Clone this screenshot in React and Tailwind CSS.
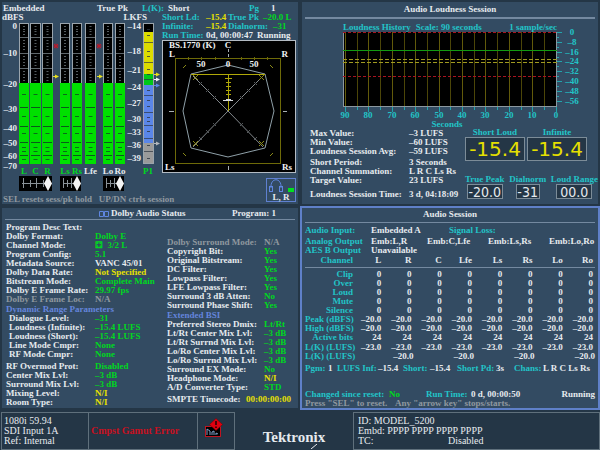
const METERS = [
  { x: 19, w: 10, label: "L", on: true },
  { x: 30, w: 11, label: "C", on: true },
  { x: 42, w: 11, label: "R", on: true },
  { x: 60, w: 10, label: "Ls", on: true },
  { x: 72, w: 10, label: "Rs", on: true },
  { x: 85, w: 11, label: "Lfe", on: false },
  { x: 103, w: 10, label: "Lo", on: false },
  { x: 115, w: 10, label: "Ro", on: false },
];

const DBFS = [["0", 26], ["–10", 53], ["–20", 84], ["–30", 109], ["–40", 128], ["–50", 143], ["–60", 156], ["–70", 166]];
const LKFS = [["–14", 26], ["–18", 51], ["–21", 70], ["–24", 87], ["–27", 103], ["–30", 119], ["–33", 132], ["–36", 145], ["–39", 158]];
const MAJOR_BLACK = [37, 53, 68];
const MINOR_BLACK = [26, 29, 31, 34, 40, 43, 46, 49, 56, 59, 62, 65, 71, 74, 77, 80];
const MAJOR_GREEN = [107, 126, 142, 155];
const MINOR_GREEN = [94, 116, 133, 147, 151, 159];

function Meter({ x, w }) {
  const c = x + w / 2;
  return (
    <g>
      <rect x={x} y="23" width={w} height="141" fill="#9aa4ac" />
      <rect x={x + 1} y="24" width={w - 2} height="59" fill="#000" />
      <rect x={x} y="83" width={w} height="81" fill="#00e000" />
      {MAJOR_BLACK.map((y) => <rect key={y} x={x + 1} y={y} width={w - 2} height="1" fill="#5f676c" />)}
      {MINOR_BLACK.map((y) => <rect key={y} x={c - 1} y={y} width="2" height="1" fill="#555c60" />)}
      {MAJOR_GREEN.map((y) => <rect key={y} x={x + 1} y={y} width={w - 2} height="1" fill="#0a5a1a" />)}
      {MINOR_GREEN.map((y) => <rect key={y} x={c - 2} y={y} width="4" height="1" fill="#0a6a1a" />)}
    </g>
  );
}

function Arrow({ x, y, color }) {
  return (
    <g fill={color}>
      <rect x={x} y={y - 0.5} width="4" height="1" />
      <path d={`M${x + 2} ${y - 2}l4 2l-4 2z`} />
    </g>
  );
}

function Correlation({ x, w, at }) {
  const ticks = [0.12, 0.32, 0.52, 0.72];
  return (
    <g>
      <rect x={x} y="176" width={w} height="15" fill="#000" />
      <rect x={x + 3} y="183" width={w - 6} height="1" fill="#8a9298" />
      {ticks.map((t, i) => (
        <rect key={t} x={Math.round(x + t * w)} y={i % 2 ? 180 : 178} width="1" height={i % 2 ? 7 : 10} fill="#8a9298" />
      ))}
      <path d={`M${at} 176l4 7.500l-4 7.500l-4 -7.500z`} fill="#f4f4f4" />
    </g>
  );
}

function MeterBridge() {
  return (
    <svg viewBox="2 22 158 169" width="158" height="169" className="block overflow-visible" fontSize="9" role="img" aria-label="Channel level meters">
      {METERS.map((m) => <Meter key={m.label} x={m.x} w={m.w} />)}
      {DBFS.map(([t, y]) => <text key={t} x="17" y={y + 3} textAnchor="end" fill="#e6eaee">{t}</text>)}
      {LKFS.map(([t, y]) => <text key={t} x="141" y={y + 3} textAnchor="end" fill="#e6eaee">{t}</text>)}
      {[56, 99].map((x) => (
        <g key={x} stroke="#c01828" strokeWidth="1">
          <path d={`M${x - 2.5} 46h5M${x} 43.500v5M${x - 2} 44l4 4M${x + 2} 44l-4 4`} />
        </g>
      ))}
      <Arrow x={53} y={76.5} color="#e8e020" />
      <Arrow x={97} y={76.5} color="#e8e020" />
      <rect x="143" y="23" width="11" height="141" fill="#9aa4ac" />
      <rect x="144" y="24" width="9" height="8" fill="#000" />
      <rect x="144" y="32" width="9" height="42" fill="#dcdc00" />
      <rect x="144" y="74" width="9" height="11" fill="#00c818" />
      <rect x="144" y="85" width="9" height="58" fill="#5a86e8" />
      <rect x="144" y="143" width="9" height="20" fill="#9a9a9a" />
      {[42, 62, 79, 95, 112, 125, 138, 151].map((y) => <rect key={y} x="144" y={y} width="9" height="1" fill="#2c3440" opacity="0.7" />)}
      {[29, 35, 51, 56, 69, 74, 90, 100, 106, 117, 121, 131, 145, 158].map((y) => <rect key={y} x="147" y={y} width="3" height="1" fill="#2c3440" opacity="0.8" />)}
      <Arrow x={154} y={74.5} color="#e8e020" />
      <Arrow x={154} y={79.5} color="#f4f4f4" />
      <Arrow x={154} y={85.5} color="#5a86e8" />
      <Arrow x={154} y={143.5} color="#b4b8bc" />
      {METERS.map((m) => (
        <text key={m.label} x={m.x + m.w / 2} y="174" textAnchor="middle" fill={m.on ? "#00d820" : "#e6eaee"}>{m.label}</text>
      ))}
      <text x="148" y="174" textAnchor="middle" fill="#00d820">P1</text>
      <Correlation x={19} w={33} at={48} />
      <Correlation x={60} w={21} at={77} />
      <Correlation x={103} w={21} at={120} />
    </svg>
  );
}

function SurroundScope() {
  return (
    <svg viewBox="162 40 134 133" width="134" height="133" className="block" fontSize="9" fill="none" role="img" aria-label="Surround sound display">
      <rect x="162.500" y="40.500" width="133" height="132" fill="#000" stroke="#b4bcc4" />
      <rect x="175.500" y="58.500" width="105" height="105" stroke="#6e6a08" />
      <path d="M188.500 57v3M201.500 57v3M215.500 57v3M241.500 57v3M254.500 57v3M267.500 57v3" stroke="#6e6a08" />
      <path d="M228 65L265 74L274 111L265 148L228 157L191 148L183 111L191 74z" stroke="#8fa0a8" />
      <path d="M193 76L228 111L263 76M193 147L228 111L263 147" stroke="#82888c" />
      <path d="M202 82l-3 3M209 89l-3 3M216 96l-3 3M254 82l3 3M247 89l3 3M240 96l3 3M202 140l-3 -3M209 133l-3 -3M216 126l-3 -3M254 140l3 -3M247 133l3 -3M240 126l3 -3" stroke="#55595c" />
      <path d="M191 74.500h74M228.500 74v37" stroke="#b0a808" />
      <path d="M225 78.500h7M226 82.500h5M226 86.500h5M226 90.500h5M226 94.500h5" stroke="#b0a808" />
      <path d="M223 100.500h10M226 99.500h5" stroke="#d8dce0" />
      <path d="M193 75l5 5M198 75l-5 5M259 75l5 5M264 75l-5 5M193 141l5 5M198 141l-5 5M259 141l5 5M264 141l-5 5M183 68l3 -3M273 68l-3 -3M183 153l3 3M273 153l-3 3" stroke="#8a8a18" />
      <path d="M228.500 49v3M228.500 54v3M228.500 166v4M169 111.500h5M283 111.500h4" stroke="#a8b0b4" />
      <g fill="#f0f2f4">
        <text x="169" y="48">BS.1770 (K)</text>
        <text x="228" y="48" textAnchor="middle">C</text>
        <text x="169" y="57">L</text>
        <text x="288" y="57" textAnchor="end">R</text>
        <text x="201" y="67" textAnchor="middle">50</text>
        <text x="228" y="67" textAnchor="middle">0</text>
        <text x="254" y="67" textAnchor="middle">50</text>
        <text x="165" y="170">Ls</text>
        <text x="292" y="170" textAnchor="end">Rs</text>
      </g>
    </svg>
  );
}

function LevelsPanel() {
  return (
    <section className="bg-[#334b62] pt-[2px] pl-px">
      <div className="grid grid-cols-[94px_45px_26px_81px_22px_1fr]">
        <span>Embedded</span>
        <span>True Pk</span>
        <span className="text-[#22c4c8]">L(K):</span>
        <span>Short</span>
        <span className="text-[#22c4c8]">Pg</span>
        <span>1</span>
      </div>
      <div className="grid grid-cols-[159px_1fr]">
        <div className="-ml-px">
          <div className="flex justify-between pr-[15px]">
            <span>dBFS</span>
            <span>LKFS</span>
          </div>
          <MeterBridge />
          <p className="mt-1 pl-px whitespace-pre text-[#8f989f]">SEL resets sess/pk hold   UP/DN ctrls session</p>
        </div>
        <div>
          <div className="grid grid-cols-[44px_22px_35px_1fr]">
            <span className="text-[#22c4c8]">Short Ld:</span>
            <span className="text-[#e6e000]">–15.4</span>
            <span className="whitespace-nowrap text-[#22c4c8]">True Pk</span>
            <span className="text-[#00d820]">–20.0 L</span>
          </div>
          <div className="grid grid-cols-[44px_22px_45px_1fr]">
            <span className="text-[#22c4c8]">Infinite:</span>
            <span className="text-[#e6e000]">–15.4</span>
            <span className="text-[#22c4c8]">Dialnorm:</span>
            <span className="text-[#00d820]">–31</span>
          </div>
          <div className="grid grid-cols-[44px_51px_1fr] whitespace-nowrap">
            <span className="text-[#22c4c8]">Run Time:</span>
            <span>0d, 00:00:47</span>
            <span>Running</span>
          </div>
          <SurroundScope />
          <div className="mt-[5px] ml-auto mr-[2px] h-6 w-[30px] border border-[#5f80d0] px-[2px]">
            <svg viewBox="0 0 26 14" width="26" height="14" className="block" fill="none" role="img" aria-label="Headphones">
              <path d="M2 9C1 -2 13 -2 12 9" stroke="#5f86e0" />
              <rect x="0.500" y="7.500" width="3" height="5" stroke="#5f86e0" />
              <rect x="10.500" y="7.500" width="3" height="5" stroke="#5f86e0" />
              <rect x="19" y="9" width="6" height="4" fill="#00e020" />
            </svg>
            <p className="text-center leading-[8px]">L, R</p>
          </div>
        </div>
      </div>
    </section>
  );
}

const Y_AXIS = ["0", "–8", "–16", "–24", "–32", "–40", "–48", "–56"];

function HistoryChart() {
  const lines = Array.from({ length: 19 }, (_, i) => Math.round(345 + i * 11.7));
  return (
    <svg viewBox="302 32 296 96" className="block w-full overflow-visible" fontSize="9" role="img" aria-label="Loudness history">
      <rect x="343" y="32" width="214" height="75" fill="#000" />
      {lines.map((x, i) => <rect key={x} x={x} y="32" width="1" height="75" fill={i % 2 ? "#4c4608" : "#625a0a"} />)}
      <path d="M343.500 107V32M343 106.500h214M556.500 107V32" stroke="#8c98a0" fill="none" />
      <path d="M343 50.500h214" stroke="#129a12" />
      <path d="M343 59.500h214M343 62.500h214" stroke="#a09a20" strokeDasharray="4 2" />
      <path d="M343 32.500h214M343 76.500h214" stroke="#a81420" strokeDasharray="3 2" />
      {lines.map((x, i) => <rect key={x} x={x} y="107" width="1" height={i % 2 ? 3 : 5} fill="#22a4ac" />)}
      {Array.from({ length: 15 }, (_, i) => (
        <rect key={i} x="557" y={32 + Math.round(i * 4.9)} width={i % 2 ? 2 : 5} height="1" fill="#22a4ac" />
      ))}
      <g fill="#22c4c8" textAnchor="middle">
        {Y_AXIS.map((t, i) => <text key={t} x="572" y={35 + Math.round(i * 9.8)}>{t}</text>)}
        {[90, 80, 70, 60, 50, 40, 30, 20, 10, 0].map((t, i) => (
          <text key={t} x={Math.round(345 + i * 23.4)} y="118">{t}</text>
        ))}
        <text x="447" y="127">Seconds</text>
      </g>
    </svg>
  );
}

const SESSION_FACTS = [
  [["Max Value:", "–3 LUFS"], ["Min Value:", "–60 LUFS"], ["Loudness Session Avg:", "–59 LUFS"]],
  [["Short Period:", "3 Seconds"], ["Channel Summation:", "L R C Ls Rs"], ["Target Value:", "23 LUFS"]],
];

function BigReadout({ label, value }) {
  return (
    <div className="w-[60px]">
      <p className="text-center text-[#22c4c8]">{label}</p>
      <p className="h-6 border border-[#7c8c98] bg-[#243646] text-center font-['DejaVu_Sans',sans-serif] text-[20px] leading-[22px] font-normal text-[#e6e000]">{value}</p>
    </div>
  );
}

function SmallReadout({ label, value, box }) {
  return (
    <div className="flex flex-col items-center">
      <p className="whitespace-nowrap text-[#22c4c8]">{label}</p>
      <p className={`${box} h-[15px] border border-[#7c8c98] bg-[#243646] text-center font-['DejaVu_Sans_Condensed','DejaVu_Sans',sans-serif] text-[14px] leading-[14px] font-normal whitespace-nowrap`}>{value}</p>
    </div>
  );
}

function LoudnessPanel() {
  return (
    <section className="bg-[#334b62] pt-[3px]">
      <h2 className="text-center">Audio Loudness Session</h2>
      <div className="mx-[3px] mt-[3px] h-[2px] bg-[#7489a0]" />
      <div className="mt-1 mr-[41px] ml-[41px] flex text-[#22c4c8]">
        <span>Loudness History</span>
        <span className="ml-[5px]">Scale: 90 seconds</span>
        <span className="ml-auto">1 sample/sec</span>
      </div>
      <HistoryChart />
      <div className="flex justify-between pl-2">
        <div className="pt-px">
          {SESSION_FACTS.map((group, i) => (
            <dl key={i} className="mb-[2px] grid grid-cols-[99px_1fr]">
              {group.map(([k, v]) => [<dt key={k}>{k}</dt>, <dd key={v}>{v}</dd>])}
            </dl>
          ))}
          <dl className="mt-[5px] grid grid-cols-[99px_1fr]">
            <dt>Loudness Session Time:</dt>
            <dd className="whitespace-nowrap">3 d, 04:18:09</dd>
          </dl>
        </div>
        <div className="flex w-[133px] flex-col justify-between">
          <div className="flex gap-[2px]">
            <BigReadout label="Short Loud" value="-15.4" />
            <BigReadout label="Infinite" value="-15.4" />
          </div>
          <div className="flex justify-between">
            <SmallReadout label="True Peak" value="-20.0" box="w-9" />
            <SmallReadout label="Dialnorm" value="-31" box="w-6" />
            <SmallReadout label="Loud Range" value="00.0" box="w-9" />
          </div>
        </div>
      </div>
    </section>
  );
}

const W = "text-[#e6eaee]";
const G = "text-[#00d820]";
const Y = "text-[#e6e000]";
const N = "text-[#8f989f]";

const DOLBY_LEFT = [
  { rows: [["Program Desc Text:", "", G], ["Dolby Format:", "Dolby E", G], ["Channel Mode:", "⚃  3/2 L", G], ["Program Config:", "5.1", G], ["Metadata Source:", "VANC 45/01", W], ["Dolby Data Rate:", "Not Specified", Y], ["Bitstream Mode:", "Complete Main", G], ["Dolby E Frame Rate:", "29.97 fps", G], ["Dolby E Frame Loc:", "N/A", N]] },
  { title: "Dynamic Range Parameters", indent: true, rows: [["Dialogue Level:", "–31", G], ["Loudness (Infinite):", "–15.4 LUFS", G], ["Loudness (Short):", "–15.4 LUFS", G], ["Line Mode Cmpr:", "None", G], ["RF Mode Cmpr:", "None", G]] },
  { gap: true, rows: [["RF Overmod Prot:", "Disabled", G], ["Center Mix Lvl:", "–3 dB", G], ["Surround Mix Lvl:", "–3 dB", G], ["Mixing Level:", "N/I", Y], ["Room Type:", "N/I", Y]] },
];
const DOLBY_RIGHT = [
  { rows: [["Dolby Surround Mode:", "N/A", N], ["Copyright Bit:", "Yes", G], ["Original Bitstream:", "Yes", G], ["DC Filter:", "Yes", G], ["Lowpass Filter:", "Yes", G], ["LFE Lowpass Filter:", "Yes", G], ["Surround 3 dB Atten:", "No", G], ["Surround Phase Shift:", "Yes", G]] },
  { title: "Extended BSI", rows: [["Preferred Stereo Dmix:", "Lt/Rt", G], ["Lt/Rt Center Mix Lvl:", "–3 dB", G], ["Lt/Rt Surrnd Mix Lvl:", "–3 dB", G], ["Lo/Ro Center Mix Lvl:", "–3 dB", G], ["Lo/Ro Surrnd Mix Lvl:", "–3 dB", G], ["Surround EX Mode:", "No", G], ["Headphone Mode:", "N/I", Y], ["A/D Converter Type:", "STD", G]] },
];

function FactGroups({ groups, cols }) {
  return groups.map((g, i) => (
    <div key={i} className={g.gap ? "mt-[3px]" : g.title ? "mt-px" : ""}>
      {g.title && <h3 className="text-[#6485dc]">{g.title}</h3>}
      <dl className={`grid ${cols}`}>
        {g.rows.map(([k, v, tone]) => [
          <dt key={k} className={`whitespace-nowrap ${tone === N ? N : W} ${g.indent ? "pl-[3px]" : ""}`}>{k}</dt>,
          <dd key={k + "v"} className={`h-[9px] whitespace-pre ${tone}`}>{v}</dd>,
        ])}
      </dl>
    </div>
  ));
}

function DolbyPanel() {
  return (
    <section className="bg-[#334b62]">
      <div className="flex items-center pt-px pl-[97px]">
        <svg viewBox="0 0 10 6" width="10" height="6" fill="none" stroke="#5f86e0" aria-hidden="true">
          <path d="M0.500 0.500h4v5h-4zM5.500 0.500h4v5h-4z" />
        </svg>
        <h2 className="ml-[2px]">Dolby Audio Status</h2>
        <span className="mr-[22px] ml-auto">Program: 1</span>
      </div>
      <div className="mx-[3px] mt-px h-px bg-[#7489a0]" />
      <div className="flex pt-[3px] pl-1">
        <div className="w-[161px]">
          <FactGroups groups={DOLBY_LEFT} cols="grid-cols-[89px_1fr]" />
        </div>
        <div className="flex-1 pt-[15px]">
          <FactGroups groups={DOLBY_RIGHT} cols="grid-cols-[97px_1fr]" />
          <dl className="mt-[3px] grid grid-cols-[79px_1fr]">
            <dt>SMPTE Timecode:</dt>
            <dd className={Y}>00:00:00:00</dd>
          </dl>
        </div>
      </div>
    </section>
  );
}

const CHANNELS = ["L", "R", "C", "Lfe", "Ls", "Rs", "Lo", "Ro"];
const COUNTS = [["Clip", "0"], ["Over", "0"], ["Loud", "0"], ["Mute", "0"], ["Silence", "0"], ["Peak (dBFS)", "–20.0"], ["High (dBFS)", "–20.0"], ["Active bits", "24"]];

function SessionPanel() {
  const th = "text-right font-bold whitespace-nowrap text-[#22c4c8]";
  return (
    <section className="bg-[#334b62] px-[3px] pt-[2px] ring-2 ring-[#5f80c8]">
      <h2 className="text-center">Audio Session</h2>
      <div className="mt-[3px] h-px bg-[#7489a0]" />
      <div className="mt-[3px] grid grid-cols-[66px_78px_1fr]">
        <span className="text-[#22c4c8]">Audio Input:</span>
        <span>Embedded A</span>
        <span className="text-[#22c4c8]">Signal Loss:</span>
      </div>
      <div className="mt-[2px] grid grid-cols-[66px_56px_61px_61px_1fr] whitespace-nowrap">
        <span className="text-[#22c4c8]">Analog Output</span>
        <span>Emb:L,R</span>
        <span>Emb:C,Lfe</span>
        <span>Emb:Ls,Rs</span>
        <span>Emb:Lo,Ro</span>
        <span className="text-[#22c4c8]">AES B Output</span>
        <span>Unavailable</span>
      </div>
      <table className="mt-px w-full table-fixed border-collapse">
        <colgroup>
          <col className="w-12" />
          {CHANNELS.map((c) => <col key={c} />)}
        </colgroup>
        <thead>
          <tr className="border-b border-[#7489a0]">
            <th scope="col" className={`${th} pb-[2px]`}>Channel</th>
            {CHANNELS.map((c) => <th key={c} scope="col" className="pr-[2px] pb-[2px] text-right font-bold">{c}</th>)}
          </tr>
        </thead>
        <tbody>
          {COUNTS.map(([name, v], i) => (
            <tr key={name}>
              <th scope="row" className={`${th} ${i === 0 ? "pt-[2px]" : ""}`}>{name}</th>
              {CHANNELS.map((c) => <td key={c} className={`pr-[2px] text-right ${i === 0 ? "pt-[2px]" : ""}`}>{v}</td>)}
            </tr>
          ))}
          <tr>
            <th scope="row" className={`${th} pt-px`}>L(K) (LUFS)</th>
            {CHANNELS.map((c) => <td key={c} className="pt-px pr-[2px] text-right">–23.0</td>)}
          </tr>
          <tr>
            <th scope="row" className={th}>L(K) (LUFS)</th>
            {["L/R", "C/Lfe", "Ls/Rs", "Lo/Ro"].map((c) => <td key={c} colSpan={2} className="text-right">–20.0</td>)}
          </tr>
        </tbody>
      </table>
      <div className="mt-[3px] grid grid-cols-[23px_9px_41px_25px_27px_27px_39px_18px_29px_1fr] whitespace-nowrap">
        <span className="text-[#22c4c8]">Pgm:</span>
        <span>1</span>
        <span className="text-[#22c4c8]">LUFS Inf:</span>
        <span>–15.4</span>
        <span className="text-[#22c4c8]">Short:</span>
        <span>–15.4</span>
        <span className="text-[#22c4c8]">Short Pd:</span>
        <span>3s</span>
        <span className="text-[#22c4c8]">Chans:</span>
        <span>L R C Ls Rs</span>
      </div>
      <div className="mt-[17px] grid grid-cols-[84px_37px_45px_1fr_auto] whitespace-nowrap">
        <span className="text-[#22c4c8]">Changed since reset:</span>
        <span className="text-[#00d820]">No</span>
        <span className="text-[#22c4c8]">Run Time:</span>
        <span>0 d, 00:00:50</span>
        <span>Running</span>
      </div>
      <div className="grid grid-cols-[90px_1fr] text-[#8f989f]">
        <span>Press "SEL" to reset.</span>
        <span>Any "arrow key" stops/starts.</span>
      </div>
    </section>
  );
}

function StatusBar() {
  return (
    <footer className="mt-[2px] flex flex-1 text-[10px] leading-[10px] font-normal">
      <div className="ml-px flex w-[234px] border border-[#5f707c]">
        <div className="w-[87px] border-r border-[#5f707c] pt-[3px] pl-[2px]">
          <p>1080i 59.94</p>
          <p>SDI Input 1A</p>
          <p>Ref: Internal</p>
        </div>
        <div className="flex flex-1 items-center border-r border-[#5f707c] pl-[2px] font-bold text-[#c81020]">Cmpst Gamut Error</div>
        <div className="flex w-[36px] items-start pt-[5px] pl-[6px]">
          <svg viewBox="0 0 20 20" width="20" height="20" role="img" aria-label="Alarm">
            <rect x="1.500" y="8.500" width="15" height="10" fill="#000" stroke="#c01420" />
            <path d="M3 17V11l3 2v4M8 17v-3l2 -1v4M12 17v-2l2 1" stroke="#7fa0c8" fill="none" />
            <path d="M12 0.500l6.500 6l-6.500 6l-6.500 -6z" fill="#e00010" stroke="#700" strokeWidth="0.500" />
            <path d="M12 3v4M12 8.500v1.500" stroke="#200" strokeWidth="1.500" />
          </svg>
        </div>
      </div>
      <div className="flex flex-1 items-center justify-center pt-4">
        <div className="flex flex-col items-end">
          <p className="text-[15px] leading-[14px] font-bold">Tektronix</p>
          <svg viewBox="0 0 14 5" width="14" height="5" aria-hidden="true"><path d="M6 0L0 5" stroke="#e6eaee" /></svg>
        </div>
      </div>
      <div className="w-[247px] border border-[#5f707c] pt-[3px] pl-1">
        <p>ID: MODEL_5200</p>
        <p>Embd: PPPP PPPP PPPP PPPP</p>
        <div className="grid grid-cols-[90px_1fr]">
          <span>TC:</span>
          <span>Disabled</span>
        </div>
      </div>
    </footer>
  );
}

export default function App() {
  return (
    <div className="flex min-h-screen flex-col bg-[#243646] font-['Liberation_Serif',serif] text-[9px] leading-[9px] font-bold text-[#e6eaee] [&_h2]:font-bold [&_h3]:font-bold">
      <main className="grid grid-cols-2 gap-1 p-[2px]">
        <LevelsPanel />
        <LoudnessPanel />
        <DolbyPanel />
        <SessionPanel />
      </main>
      <StatusBar />
    </div>
  );
}
